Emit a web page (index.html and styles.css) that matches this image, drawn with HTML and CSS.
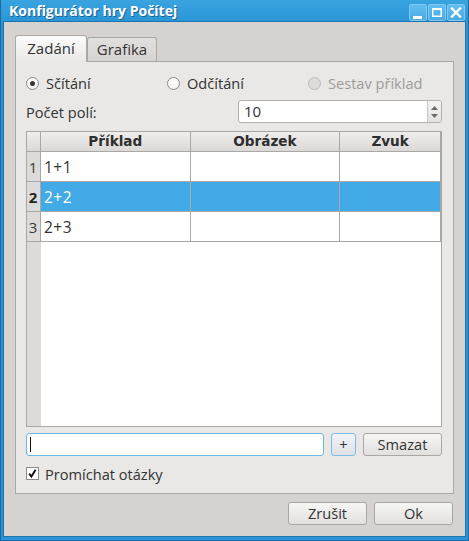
FILE: index.html
```html
<!DOCTYPE html>
<html lang="cs">
<head>
<meta charset="utf-8">
<title>Konfigurátor hry Počítej</title>
<link rel="stylesheet" href="styles.css">
</head>
<body>
<div class="window">
  <div class="titlebar">
    <span class="title">Konfigurátor hry Počítej</span>
    <div class="wbtns">
      <span class="wbtn"><svg width="18" height="17" viewBox="0 0 18 17"><rect x="4" y="12" width="9" height="3" fill="#fff"/></svg></span>
      <span class="wbtn"><svg width="18" height="17" viewBox="0 0 18 17"><rect x="4.75" y="4.75" width="8.5" height="7.5" fill="none" stroke="#fff" stroke-width="1.5"/><rect x="4" y="4" width="10" height="2" fill="#fff"/></svg></span>
      <span class="wbtn"><svg width="18" height="17" viewBox="0 0 18 17"><path d="M5 4.5 L13 12.5 M13 4.5 L5 12.5" stroke="#fff" stroke-width="2.4" stroke-linecap="square"/></svg></span>
    </div>
  </div>
  <div class="client">
    <div class="tabs">
      <div class="tab tab-active">Zadání</div>
      <div class="tab">Grafika</div>
    </div>
    <div class="pane">
      <div class="radios">
        <label class="radio"><span class="radio-dot radio-checked"></span>Sčítání</label>
        <label class="radio"><span class="radio-dot"></span>Odčítání</label>
        <label class="radio radio-disabled"><span class="radio-dot"></span>Sestav příklad</label>
      </div>
      <div class="count-row">
        <span>Počet polí:</span>
        <div class="spin">
          <span class="spin-val">10</span>
          <div class="spin-arrows">
            <svg width="13" height="21" viewBox="0 0 13 21"><path d="M3 9 L6.5 5 L10 9 Z" fill="#6a6a6a"/><path d="M3 13 L6.5 17 L10 13 Z" fill="#6a6a6a"/></svg>
          </div>
        </div>
      </div>
      <div class="table">
        <div class="trow thead">
          <div class="c c-num"></div>
          <div class="c c1">Příklad</div>
          <div class="c c2">Obrázek</div>
          <div class="c c3">Zvuk</div>
        </div>
        <div class="trow tbody">
          <div class="c c-num">1</div>
          <div class="c c1">1+1</div>
          <div class="c c2"></div>
          <div class="c c3"></div>
        </div>
        <div class="trow tbody selected">
          <div class="c c-num">2</div>
          <div class="c c1">2+2</div>
          <div class="c c2"></div>
          <div class="c c3"></div>
        </div>
        <div class="trow tbody">
          <div class="c c-num">3</div>
          <div class="c c1">2+3</div>
          <div class="c c2"></div>
          <div class="c c3"></div>
        </div>
        <div class="tfill">
          <div class="tfill-num"></div>
          <div class="tfill-body"></div>
        </div>
      </div>
      <div class="input-row">
        <div class="text-input"><span class="caret"></span></div>
        <button class="btn btn-plus">+</button>
        <button class="btn btn-smazat">Smazat</button>
      </div>
      <label class="check-row">
        <span class="checkbox"><svg width="11" height="11" viewBox="0 0 11 11"><path d="M2.2 5.6 L4.4 8.6 L8.6 1.8" fill="none" stroke="#111" stroke-width="1.9"/></svg></span>
        Promíchat otázky
      </label>
    </div>
    <div class="dialog-btns">
      <button class="btn btn-dialog">Zrušit</button>
      <button class="btn btn-dialog">Ok</button>
    </div>
  </div>
</div>
</body>
</html>
```
FILE: styles.css
```css
* { box-sizing: border-box; }
html, body { margin: 0; padding: 0; }
body {
  width: 469px;
  height: 541px;
  font-family: "Open Sans", "Noto Sans", sans-serif;
  font-size: 14.6px;
  color: #333333;
  overflow: hidden;
}
.window {
  width: 469px;
  height: 541px;
  display: flex;
  flex-direction: column;
  background: #2b93d3;
  border: 1px solid #1b6aa3;
  border-top: none;
}
.titlebar {
  height: 22px;
  display: flex;
  align-items: center;
  justify-content: space-between;
  padding: 0 3px 0 8px;
  background: linear-gradient(#3aa4e0, #2a95d6);
}
.title {
  font-weight: bold;
  font-size: 14px;
  color: #fff;
  text-shadow: 1px 1px 0 #1d6496;
  line-height: 22px;
}
.wbtns {
  display: flex;
  gap: 1px;
  padding-top: 3px;
}
.wbtn {
  width: 18px;
  height: 17px;
  display: block;
  border: 1px solid #7fc9f2;
  border-radius: 2px;
  background: linear-gradient(#62bdef, #4aaae4);
  position: relative;
  overflow: hidden;
}
.wbtn svg { position: absolute; left: -1px; top: -1px; }
.client {
  flex: 1;
  margin: 0 3px 4px 3px;
  background: #d6d2d0;
  box-shadow: 0 0 0 1px #2173ad;
  padding: 13px 11px 11px 11px;
  display: flex;
  flex-direction: column;
}
.tabs {
  display: flex;
  align-items: flex-end;
  height: 26px;
  position: relative;
  z-index: 1;
}
.tab {
  height: 24px;
  width: 70px;
  border: 1px solid #aaa8a6;
  border-bottom: none;
  border-radius: 3px 3px 0 0;
  background: linear-gradient(#e2e0de, #d6d3d1);
  display: flex;
  align-items: center;
  justify-content: center;
  line-height: 1;
  padding-bottom: 1px;
  font-size: 15px;
}
.tab-active {
  width: 72px;
  height: 27px;
  margin-bottom: -1px;
  background: linear-gradient(#fbfbfb, #e9e8e6);
  padding-bottom: 2px;
}
.pane {
  height: 433px;
  border: 1px solid #aaa8a6;
  background: #e9e8e6;
  padding: 12px 11px 13px 10px;
  display: flex;
  flex-direction: column;
}
.radios {
  height: 18px;
  display: grid;
  grid-template-columns: 141px 141px auto;
  align-items: center;
}
.radio {
  display: flex;
  align-items: center;
  gap: 7px;
  line-height: 18px;
}
.radio-dot {
  width: 13px;
  height: 13px;
  border-radius: 50%;
  border: 1px solid #8c8a88;
  background: linear-gradient(#ffffff, #f1f1f1);
  display: flex;
  align-items: center;
  justify-content: center;
}
.radio-checked::after {
  content: "";
  width: 5px;
  height: 5px;
  border-radius: 50%;
  background: #363636;
}
.radio-disabled { color: #9d9b99; }
.radio-disabled .radio-dot {
  border-color: #bdbbb9;
  background: #dedcda;
}
.count-row {
  margin-top: 8px;
  height: 23px;
  display: flex;
  align-items: center;
  justify-content: space-between;
}
.spin {
  width: 204px;
  height: 23px;
  border: 1px solid #b2b0ae;
  border-radius: 3px;
  background: #fff;
  display: flex;
  align-items: center;
  justify-content: space-between;
  overflow: hidden;
}
.spin-val { padding-left: 5px; line-height: 21px; font-size: 15px; }
.spin-arrows {
  width: 14px;
  height: 21px;
  border-left: 1px solid #c8c6c4;
  background: linear-gradient(#f4f4f4, #e4e2e0);
  display: flex;
}
.table {
  margin-top: 8px;
  flex: 1;
  border: 1px solid #a9a7a5;
  background: #fff;
  display: flex;
  flex-direction: column;
}
.trow {
  display: flex;
  height: 30px;
  border-bottom: 1px solid #aaa8a6;
}
.thead {
  height: 20px;
  background: linear-gradient(#efeeec, #dbd9d7);
  font-family: "DejaVu Sans", sans-serif;
  font-weight: bold;
  font-size: 13.6px;
  color: #2e2e2e;
}
.c {
  border-right: 1px solid #aaa8a6;
  display: flex;
  align-items: center;
  white-space: nowrap;
}
.c-num { width: 14px; justify-content: center; padding-right: 1px; }
.c1 { width: 150px; }
.c2 { width: 150px; }
.c3 { width: 101px; }
.thead .c { justify-content: center; line-height: 1; }
.tbody .c1 { padding-left: 3px; font-size: 15.5px; letter-spacing: 0.5px; }
.tbody .c-num {
  background: #dddbd9;
  color: #3a3a3a;
  font-size: 15px;
}
.selected .c1, .selected .c2, .selected .c3 {
  background: #42aae6;
  color: #fff;
}
.selected .c-num { font-weight: bold; color: #222; }
.tfill {
  flex: 1;
  display: flex;
}
.tfill-num { width: 14px; background: #dddbd9; }
.tfill-body { flex: 1; }
.input-row {
  margin-top: 6px;
  height: 23px;
  display: flex;
  gap: 7px;
}
.text-input {
  width: 298px;
  height: 23px;
  border: 1px solid #6cb9e6;
  border-radius: 3px;
  background: #fff;
  padding: 3px 0 0 3px;
}
.caret {
  display: block;
  width: 1px;
  height: 15px;
  background: #111;
}
.btn {
  height: 23px;
  font-family: "Open Sans", "Noto Sans", sans-serif;
  font-size: 14.6px;
  color: #333333;
  border: 1px solid #a9a7a5;
  border-radius: 3px;
  background: linear-gradient(#f6f6f5, #e2e0de);
  padding: 0;
  line-height: 1;
  display: flex;
  align-items: center;
  justify-content: center;
}
.btn-plus {
  width: 25px;
  border-color: #79bde6;
  background: linear-gradient(#f2f4f6, #dde1e5);
}
.btn-smazat { width: 79px; }
.check-row {
  margin-top: 11px;
  height: 13px;
  display: flex;
  align-items: center;
  gap: 6px;
}
.checkbox {
  width: 13px;
  height: 13px;
  border: 1px solid #8c8a88;
  background: #fff;
  display: flex;
  align-items: center;
  justify-content: center;
}
.dialog-btns {
  margin-top: 8px;
  display: flex;
  justify-content: flex-end;
  gap: 7px;
  padding-right: 1px;
}
.btn-dialog { width: 79px; }
```
